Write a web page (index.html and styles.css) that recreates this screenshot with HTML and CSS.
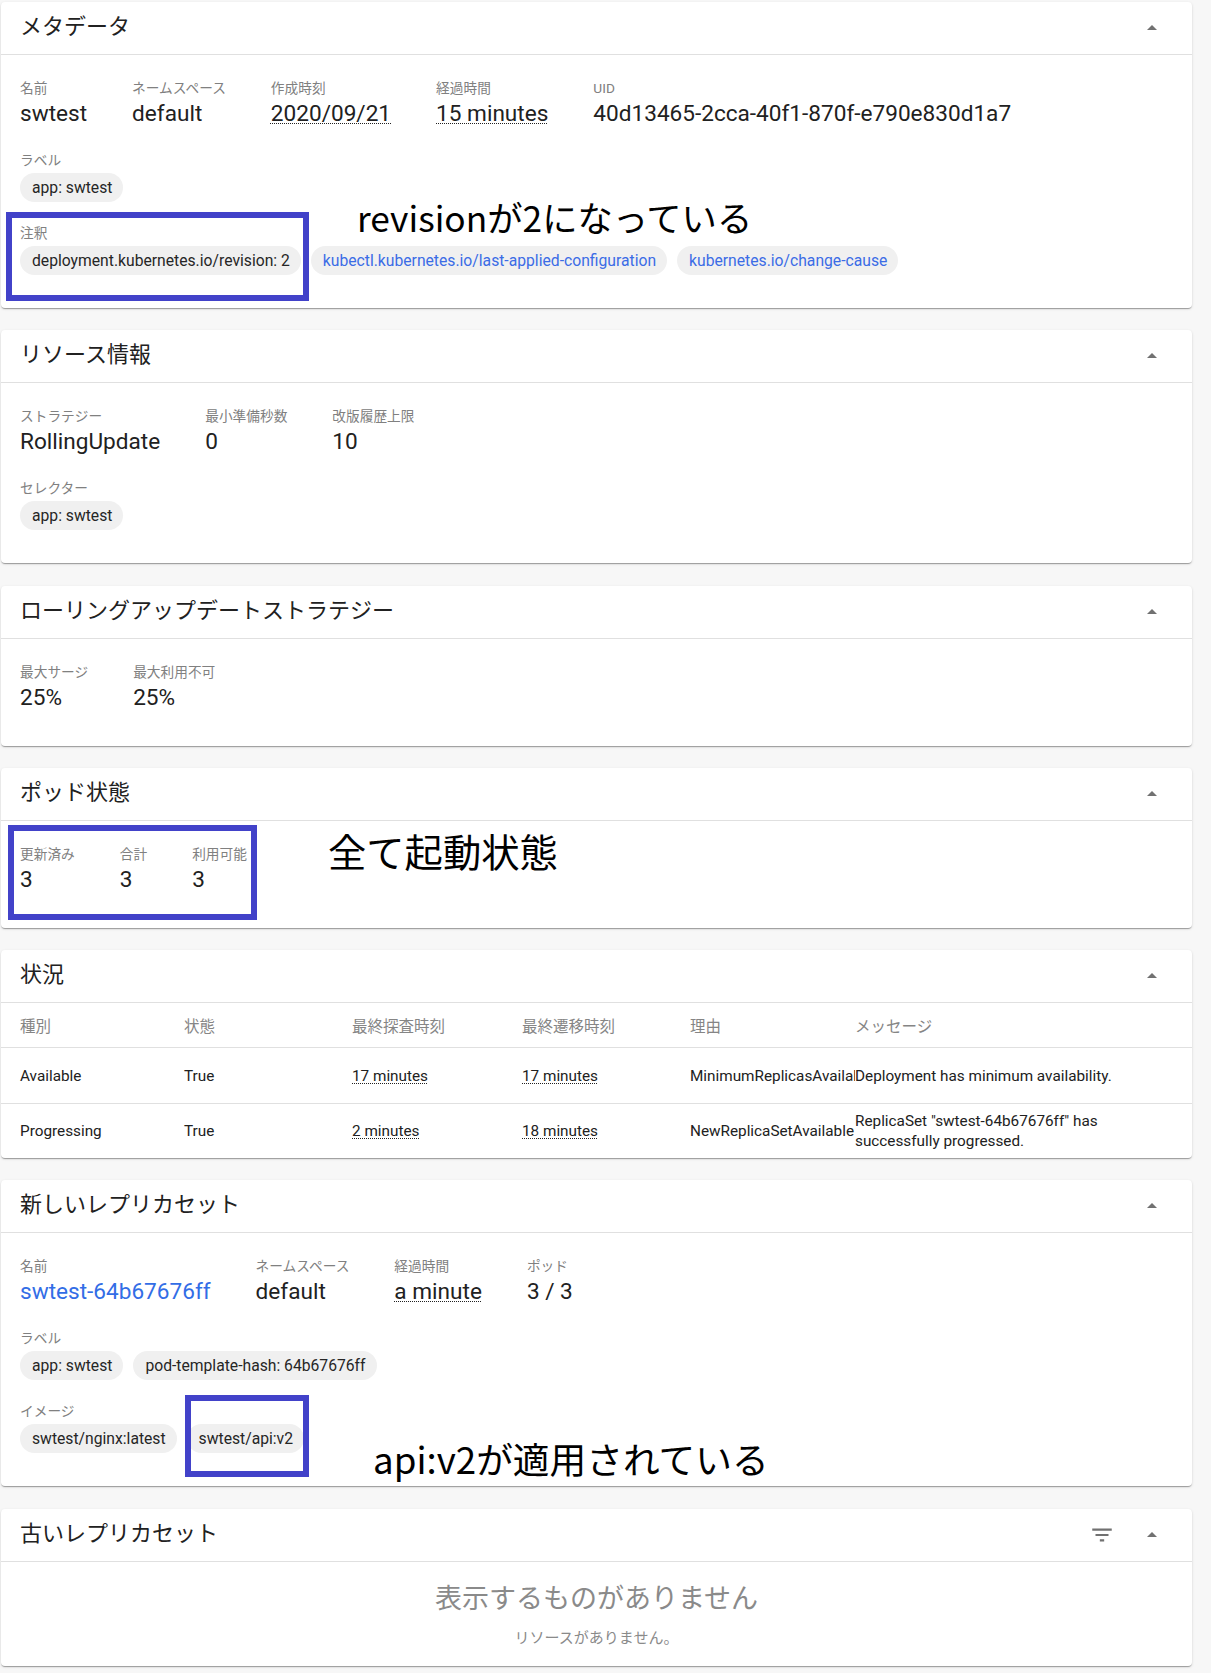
FILE: index.html
```html
<!DOCTYPE html>
<html lang="ja">
<head>
<meta charset="utf-8">
<title>Deployment swtest</title>
<link rel="stylesheet" href="styles.css">
</head>
<body>
<div class="page">

  <section class="card">
    <header class="card-head">
      <h2 class="card-title">メタデータ</h2>
      <div class="card-actions">
        <button class="icon-btn" aria-label="collapse"><svg viewBox="0 0 24 24" width="24" height="24"><path d="M7 14l5-5 5 5z"/></svg></button>
      </div>
    </header>
    <div class="card-body">
      <div class="props">
        <div class="prop"><div class="prop-label">名前</div><div class="prop-value">swtest</div></div>
        <div class="prop"><div class="prop-label">ネームスペース</div><div class="prop-value">default</div></div>
        <div class="prop"><div class="prop-label">作成時刻</div><div class="prop-value"><span class="time">2020/09/21</span></div></div>
        <div class="prop"><div class="prop-label">経過時間</div><div class="prop-value"><span class="time">15 minutes</span></div></div>
        <div class="prop"><div class="prop-label">UID</div><div class="prop-value">40d13465-2cca-40f1-870f-e790e830d1a7</div></div>
      </div>
      <div class="field">
        <div class="prop-label">ラベル</div>
        <div class="chips"><span class="chip">app: swtest</span></div>
      </div>
      <div class="field">
        <div class="prop-label">注釈</div>
        <div class="chips">
          <span class="chip">deployment.kubernetes.io/revision: 2</span>
          <span class="chip chip-link">kubectl.kubernetes.io/last-applied-configuration</span>
          <span class="chip chip-link">kubernetes.io/change-cause</span>
        </div>
      </div>
    </div>
    <div class="mark mark-revision"></div>
    <p class="note note-revision">revisionが2になっている</p>
  </section>

  <section class="card">
    <header class="card-head">
      <h2 class="card-title">リソース情報</h2>
      <div class="card-actions">
        <button class="icon-btn" aria-label="collapse"><svg viewBox="0 0 24 24" width="24" height="24"><path d="M7 14l5-5 5 5z"/></svg></button>
      </div>
    </header>
    <div class="card-body">
      <div class="props">
        <div class="prop"><div class="prop-label">ストラテジー</div><div class="prop-value">RollingUpdate</div></div>
        <div class="prop"><div class="prop-label">最小準備秒数</div><div class="prop-value">0</div></div>
        <div class="prop"><div class="prop-label">改版履歴上限</div><div class="prop-value">10</div></div>
      </div>
      <div class="field">
        <div class="prop-label">セレクター</div>
        <div class="chips"><span class="chip">app: swtest</span></div>
      </div>
    </div>
  </section>

  <section class="card card-spaced">
    <header class="card-head">
      <h2 class="card-title">ローリングアップデートストラテジー</h2>
      <div class="card-actions">
        <button class="icon-btn" aria-label="collapse"><svg viewBox="0 0 24 24" width="24" height="24"><path d="M7 14l5-5 5 5z"/></svg></button>
      </div>
    </header>
    <div class="card-body">
      <div class="props">
        <div class="prop"><div class="prop-label">最大サージ</div><div class="prop-value">25%</div></div>
        <div class="prop"><div class="prop-label">最大利用不可</div><div class="prop-value">25%</div></div>
      </div>
    </div>
  </section>

  <section class="card">
    <header class="card-head">
      <h2 class="card-title">ポッド状態</h2>
      <div class="card-actions">
        <button class="icon-btn" aria-label="collapse"><svg viewBox="0 0 24 24" width="24" height="24"><path d="M7 14l5-5 5 5z"/></svg></button>
      </div>
    </header>
    <div class="card-body">
      <div class="props">
        <div class="prop"><div class="prop-label">更新済み</div><div class="prop-value">3</div></div>
        <div class="prop"><div class="prop-label">合計</div><div class="prop-value">3</div></div>
        <div class="prop"><div class="prop-label">利用可能</div><div class="prop-value">3</div></div>
      </div>
    </div>
    <div class="mark mark-pods"></div>
    <p class="note note-pods">全て起動状態</p>
  </section>

  <section class="card">
    <header class="card-head">
      <h2 class="card-title">状況</h2>
      <div class="card-actions">
        <button class="icon-btn" aria-label="collapse"><svg viewBox="0 0 24 24" width="24" height="24"><path d="M7 14l5-5 5 5z"/></svg></button>
      </div>
    </header>
    <div class="ctable">
      <div class="crow crow-head">
        <div>種別</div><div>状態</div><div>最終探査時刻</div><div>最終遷移時刻</div><div>理由</div><div>メッセージ</div>
      </div>
      <div class="crow">
        <div>Available</div><div>True</div><div><span class="time">17 minutes</span></div><div><span class="time">17 minutes</span></div><div class="clip">MinimumReplicasAvailable</div><div class="msg">Deployment has minimum availability.</div>
      </div>
      <div class="crow">
        <div>Progressing</div><div>True</div><div><span class="time">2 minutes</span></div><div><span class="time">18 minutes</span></div><div class="clip">NewReplicaSetAvailable</div><div class="msg">ReplicaSet "swtest-64b67676ff" has successfully progressed.</div>
      </div>
    </div>
  </section>

  <section class="card">
    <header class="card-head">
      <h2 class="card-title">新しいレプリカセット</h2>
      <div class="card-actions">
        <button class="icon-btn" aria-label="collapse"><svg viewBox="0 0 24 24" width="24" height="24"><path d="M7 14l5-5 5 5z"/></svg></button>
      </div>
    </header>
    <div class="card-body">
      <div class="props">
        <div class="prop"><div class="prop-label">名前</div><div class="prop-value"><a class="link" href="#">swtest-64b67676ff</a></div></div>
        <div class="prop"><div class="prop-label">ネームスペース</div><div class="prop-value">default</div></div>
        <div class="prop"><div class="prop-label">経過時間</div><div class="prop-value"><span class="time">a minute</span></div></div>
        <div class="prop"><div class="prop-label">ポッド</div><div class="prop-value">3 / 3</div></div>
      </div>
      <div class="field">
        <div class="prop-label">ラベル</div>
        <div class="chips"><span class="chip">app: swtest</span><span class="chip">pod-template-hash: 64b67676ff</span></div>
      </div>
      <div class="field">
        <div class="prop-label">イメージ</div>
        <div class="chips"><span class="chip">swtest/nginx:latest</span><span class="chip">swtest/api:v2</span></div>
      </div>
    </div>
    <div class="mark mark-image"></div>
    <p class="note note-image">api:v2が適用されている</p>
  </section>

  <section class="card card-spaced">
    <header class="card-head">
      <h2 class="card-title">古いレプリカセット</h2>
      <div class="card-actions">
        <button class="icon-btn" aria-label="filter"><svg viewBox="0 0 24 24" width="26" height="26"><path d="M10 18h4v-2h-4v2zM3 6v2h18V6H3zm3 7h12v-2H6v2z"/></svg></button>
        <button class="icon-btn" aria-label="collapse"><svg viewBox="0 0 24 24" width="24" height="24"><path d="M7 14l5-5 5 5z"/></svg></button>
      </div>
    </header>
    <div class="empty">
      <div class="empty-title">表示するものがありません</div>
      <div class="empty-sub">リソースがありません。</div>
    </div>
  </section>

</div>
</body>
</html>
```

FILE: styles.css
```css
* { box-sizing: border-box; }

html, body { margin: 0; padding: 0; }

body {
  background: #f7f7f7;
  font-family: Roboto, "Noto Sans CJK JP", sans-serif;
  color: #212121;
  min-height: 1673px;
}

.page {
  padding: 2px 19px 7px 1px;
  display: flex;
  flex-direction: column;
  gap: 22px;
}

.card {
  position: relative;
  background: #fff;
  border-radius: 4px;
  box-shadow: 0 2px 1px -1px rgba(0,0,0,.2), 0 1px 1px 0 rgba(0,0,0,.14), 0 1px 3px 0 rgba(0,0,0,.12);
}

.card-spaced {
  margin-top: 1px;
}

.card-head {
  height: 53px;
  display: flex;
  align-items: center;
  padding: 0 20px 0 19px;
  border-bottom: 1px solid #e0e0e0;
}

.card-title {
  margin: 0;
  font-size: 22px;
  font-weight: 400;
  line-height: 1;
  color: #212121;
  padding-bottom: 3px;
}

.card-actions {
  margin-left: auto;
  display: flex;
  align-items: center;
  gap: 10px;
}

.icon-btn {
  width: 40px;
  height: 40px;
  border: 0;
  padding: 0;
  background: transparent;
  display: flex;
  align-items: center;
  justify-content: center;
  fill: #717171;
}

.card-body {
  padding: 24px 19px 31px;
}

.props {
  display: flex;
  column-gap: 45px;
}

.prop-label {
  font-size: 13.7px;
  line-height: 18px;
  color: #808080;
  white-space: nowrap;
}

.prop-value {
  font-size: 22.6px;
  line-height: 34px;
  color: #212121;
  white-space: nowrap;
}

.time {
  text-decoration: underline dotted 1px;
  text-underline-offset: 2px;
}

.link {
  color: #326de6;
  text-decoration: none;
}

.field {
  margin-top: 20px;
}

.field + .field {
  margin-top: 22px;
}

.field:last-child {
  padding-bottom: 2px;
}

.chips {
  display: flex;
  flex-wrap: wrap;
  column-gap: 10px;
  margin-top: 4px;
}

.chip {
  height: 29px;
  line-height: 29px;
  padding: 0 11px 0 12px;
  border-radius: 15px;
  background: #f0f0f0;
  font-size: 15.7px;
  color: #262626;
  white-space: nowrap;
}

.chip-link {
  color: #3b6ce6;
}

/* conditions table */
.ctable {
  font-size: 15.3px;
}

.crow {
  display: grid;
  grid-template-columns: 164px 168px 170px 168px 165px 1fr;
  align-items: center;
  height: 56px;
  padding: 0 24px 0 19px;
  border-bottom: 1px solid #e0e0e0;
  color: #212121;
}

.crow-head {
  height: 45px;
  color: #858585;
  font-size: 15.5px;
}

.crow:last-child {
  border-bottom: 0;
  height: 54px;
}

.clip {
  overflow: hidden;
  white-space: nowrap;
}

.msg {
  line-height: 20px;
}

/* empty state */
.empty {
  padding: 20px 19px 18px;
  text-align: center;
  color: #8a8a8a;
}

.empty-title {
  font-size: 27px;
  line-height: 34px;
}

.empty-sub {
  margin-top: 12px;
  font-size: 15px;
  line-height: 20px;
}

/* overlay annotations */
.mark {
  position: absolute;
  border: 6px solid #4242c9;
}

.mark-revision { left: 5px; top: 210px; width: 303px; height: 89px; }
.mark-pods { left: 7px; top: 57px; width: 249px; height: 95px; }
.mark-image { left: 184px; top: 215px; width: 124px; height: 82px; }

.note {
  position: absolute;
  margin: 0;
  font-family: "Noto Sans CJK JP", sans-serif;
  color: #000;
  white-space: nowrap;
  font-weight: 400;
}

.note-revision { left: 356px; top: 193px; font-size: 35.3px; line-height: 43px; }
.note-pods { left: 327px; top: 60px; font-size: 38.3px; line-height: 46px; }
.note-image { left: 372px; top: 256px; font-size: 36.7px; line-height: 44px; }
```
